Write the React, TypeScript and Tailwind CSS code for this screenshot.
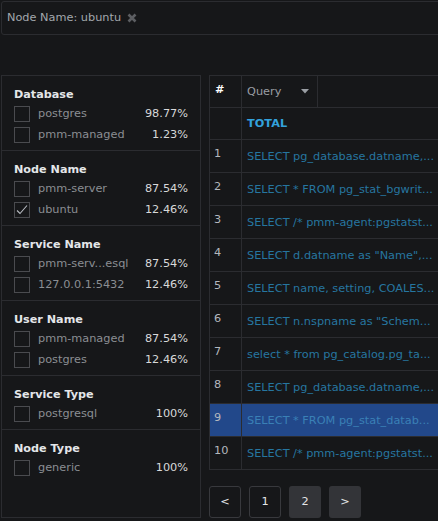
import React from "react";

// Query analytics filter panel + query list, dark theme.

type FilterItem = { label: string; value: string; checked?: boolean };
type FilterGroup = { title: string; items: FilterItem[] };

const GROUPS: FilterGroup[] = [
  {
    title: "Database",
    items: [
      { label: "postgres", value: "98.77%" },
      { label: "pmm-managed", value: "1.23%" },
    ],
  },
  {
    title: "Node Name",
    items: [
      { label: "pmm-server", value: "87.54%" },
      { label: "ubuntu", value: "12.46%", checked: true },
    ],
  },
  {
    title: "Service Name",
    items: [
      { label: "pmm-serv...esql", value: "87.54%" },
      { label: "127.0.0.1:5432", value: "12.46%" },
    ],
  },
  {
    title: "User Name",
    items: [
      { label: "pmm-managed", value: "87.54%" },
      { label: "postgres", value: "12.46%" },
    ],
  },
  {
    title: "Service Type",
    items: [{ label: "postgresql", value: "100%" }],
  },
  {
    title: "Node Type",
    items: [{ label: "generic", value: "100%" }],
  },
];

const QUERIES = [
  "SELECT pg_database.datname,...",
  "SELECT * FROM pg_stat_bgwrit...",
  "SELECT /* pmm-agent:pgstatst...",
  'SELECT d.datname as "Name",...',
  "SELECT name, setting, COALES...",
  'SELECT n.nspname as "Schem...',
  "select * from pg_catalog.pg_ta...",
  "SELECT pg_database.datname,...",
  "SELECT * FROM pg_stat_datab...",
  "SELECT /* pmm-agent:pgstatst...",
];

function Checkbox({ checked }: { checked?: boolean }) {
  return (
    <div className="w-4 h-4 border border-[#4a4b4f] flex-shrink-0 flex items-center justify-center">
      {checked && (
        <svg width="14" height="14" viewBox="0 0 14 14" fill="none">
          <path d="M2 7.5 L5 10.5 L12 2.5" stroke="#b8bcc2" strokeWidth="1.1" />
        </svg>
      )}
    </div>
  );
}

function Group({ group, last }: { group: FilterGroup; last: boolean }) {
  return (
    <div
      className={
        "pt-[11px] pb-[5px] pl-3 pr-3 " +
        (last ? "flex-1" : "border-b border-[#2b2c30]")
      }
    >
      <div className="font-bold text-[11.2px] leading-4 text-[#e4e6e9]">
        {group.title}
      </div>
      {group.items.map((item, i) => (
        <div key={i} className="h-[21px] flex items-center">
          <Checkbox checked={item.checked} />
          <span className="ml-2 text-[#8b8e93]">{item.label}</span>
          <span className="ml-auto text-[#d8d9da]">{item.value}</span>
        </div>
      ))}
    </div>
  );
}

export default function App() {
  return (
    <div
      className="w-full h-[521px] overflow-hidden bg-[#161719] p-[1px] text-[11.3px] leading-4"
      style={{ fontFamily: '"DejaVu Sans", sans-serif' }}
    >
      {/* Active filter bar */}
      <div className="w-[700px] h-[34px] border border-[#2b2c30] rounded-[3px] flex items-center pl-[5px]">
        <span className="text-[#a3a7ad]">Node Name: ubuntu</span>
        <svg className="ml-[6px]" width="10" height="10" viewBox="0 0 10 10">
          <path d="M1.5 1.5 L8.5 8.5 M8.5 1.5 L1.5 8.5" stroke="#5c5e62" strokeWidth="2.6" />
        </svg>
      </div>

      <div className="mt-10 flex gap-2">
        {/* Filters */}
        <div className="w-[200px] h-[443px] flex-shrink-0 border border-[#2b2c30] flex flex-col">
          {GROUPS.map((g, i) => (
            <Group key={g.title} group={g} last={i === GROUPS.length - 1} />
          ))}
        </div>

        {/* Query list */}
        <div className="flex-shrink-0 flex flex-col">
          <div className="w-[600px] border border-[#2b2c30] border-b-0">
            <div className="flex h-8 border-b border-[#2b2c30]">
              <div className="w-8 pl-[5px] pt-[6px] border-r border-[#2b2c30] font-bold text-white">
                #
              </div>
              <div className="w-[76px] pl-[5px] flex items-center border-r border-[#2b2c30] text-[#9a9ea4]">
                Query
                <svg className="ml-auto mr-[8px]" width="8" height="5" viewBox="0 0 8 5">
                  <path d="M0 0 H8 L4 4.5 Z" fill="#9a9ea4" />
                </svg>
              </div>
            </div>
            <div className="flex h-8 border-b border-[#2b2c30]">
              <div className="w-8 border-r border-[#2b2c30]" />
              <div className="pl-[5px] flex items-center font-bold text-[#33a2dd]">
                TOTAL
              </div>
            </div>
            {QUERIES.map((q, i) => {
              const active = i === 8;
              return (
                <div
                  key={i}
                  className={
                    "flex h-[33px] border-b border-[#2b2c30] " +
                    (active ? "bg-[#22488a]" : "")
                  }
                >
                  <div className="w-8 flex-shrink-0 pl-[4px] pt-[6px] border-r border-[#2b2c30] text-[#b4b8be]">
                    {i + 1}
                  </div>
                  <div
                    className={
                      "pl-[5px] pt-[2px] flex items-center whitespace-nowrap " +
                      (active ? "text-[#3a80b6]" : "text-[#2676a0]")
                    }
                  >
                    {q}
                  </div>
                </div>
              );
            })}
          </div>

          {/* Pagination */}
          <div className="mt-[16px] flex gap-2">
            <button className="w-8 h-8 rounded-[3px] border border-[#38393d] text-[#e4e6e9] flex items-center justify-center">
              &lt;
            </button>
            <button className="w-8 h-8 rounded-[3px] border border-[#38393d] text-[#e4e6e9] flex items-center justify-center">
              1
            </button>
            <button className="w-8 h-8 rounded-[3px] bg-[#333438] text-[#e4e6e9] flex items-center justify-center">
              2
            </button>
            <button className="w-8 h-8 rounded-[3px] bg-[#333438] text-[#e4e6e9] flex items-center justify-center">
              &gt;
            </button>
          </div>
        </div>
      </div>
    </div>
  );
}
